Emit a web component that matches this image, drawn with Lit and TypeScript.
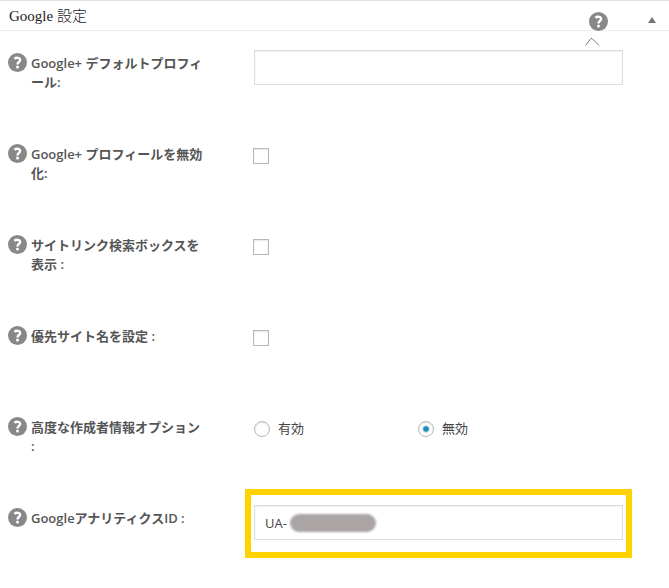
import { LitElement, html, css, svg } from "lit";
import { customElement, property } from "lit/decorators.js";

@customElement("help-button")
class HelpButton extends LitElement {
  static styles = css`
    :host {
      display: block;
      width: 19px;
      height: 19px;
      flex: none;
    }
    .help {
      display: block;
      width: 19px;
      height: 19px;
      padding: 0;
      border: 0;
      background: none;
      cursor: pointer;
    }
    .icon {
      display: block;
    }
  `;

  render() {
    return html`
      <button class="help" type="button" aria-label="ヘルプ">
        <svg class="icon" width="19" height="19" viewBox="0 0 19 19" aria-hidden="true">
          ${svg`
            <circle cx="9.5" cy="9.5" r="9.5" fill="#888" />
            <path d="M6.4 5.8C8 4.4 12.1 4.2 12.1 7C12.1 9.1 9.5 8.9 9.5 11.4" fill="none" stroke="#fff" stroke-width="2.4" />
            <circle cx="9.5" cy="14" r="1.5" fill="#fff" />
          `}
        </svg>
      </button>
    `;
  }
}

@customElement("setting-row")
class SettingRow extends LitElement {
  static styles = css`
    :host {
      display: flex;
      align-items: flex-start;
      min-height: 91px;
    }
    .heading {
      display: flex;
      gap: 4px;
      box-sizing: border-box;
      width: 246px;
      padding-top: 3px;
      flex: none;
    }
    .text {
      width: 174px;
      padding-top: 1px;
    }
    .field {
      flex: 1;
      min-width: 0;
    }
  `;

  render() {
    return html`
      <div class="heading">
        <help-button></help-button>
        <div class="text"><slot name="label"></slot></div>
      </div>
      <div class="field"><slot></slot></div>
    `;
  }
}

@customElement("app-root")
class AppRoot extends LitElement {
  @property() heading = "Google 設定";

  static styles = css`
    :host {
      display: block;
      background: #fff;
      color: #444;
      font: 13px/19px "Open Sans", "Noto Sans CJK JP", sans-serif;
    }
    .header {
      display: flex;
      align-items: center;
      box-sizing: border-box;
      height: 31px;
      padding: 0 8px 0 9px;
      border-top: 1px solid #e1e1e1;
      border-bottom: 1px solid #eee;
    }
    .title {
      flex: 1;
      margin: 0;
      color: #222;
      font: 300 15px/24px "Liberation Serif", "Noto Sans CJK JP", serif;
    }
    .hint {
      position: relative;
      align-self: flex-end;
      margin: 0 35px -1px 0;
    }
    .pointer {
      position: absolute;
      top: 25px;
      left: -4px;
    }
    .toggle {
      display: flex;
      align-items: center;
      justify-content: center;
      width: 18px;
      height: 20px;
      margin-top: 8px;
      padding: 0;
      border: 0;
      background: none;
    }
    .form {
      padding: 19px 46px 0 8px;
    }
    .label {
      display: block;
      color: #555;
      font-weight: 600;
    }
    .input {
      display: block;
      box-sizing: border-box;
      width: 100%;
      height: 35px;
      padding: 0 10px;
      border: 1px solid #ddd;
      border-radius: 0;
      background: #fff;
      box-shadow: inset 0 1px 2px rgba(0, 0, 0, 0.07);
      color: #444;
      font: inherit;
      outline: 0;
    }
    .box,
    .radio {
      display: block;
      appearance: none;
      box-sizing: border-box;
      width: 16px;
      height: 16px;
      margin: 0;
      border: 1px solid #b4b9be;
      background: #fff;
      box-shadow: inset 0 1px 2px rgba(0, 0, 0, 0.1);
      flex: none;
    }
    .box {
      margin: 7px 0 0 -1px;
    }
    .radio {
      border-radius: 50%;
    }
    .radio:checked {
      background: radial-gradient(circle, #1e8cbe 2px, #1e8cbe 2px, #fff 4px);
    }
    .choices {
      display: grid;
      grid-template-columns: 164px 1fr;
      padding-top: 5px;
    }
    .choice {
      display: flex;
      align-items: center;
      gap: 8px;
    }
    .highlight {
      position: relative;
      margin: -16px -9px 0;
      padding: 10px 3px 12px;
      border: 6px solid #ffd200;
    }
    .mask {
      position: absolute;
      top: 19px;
      left: 39px;
      width: 86px;
      height: 18px;
      border-radius: 9px;
      background: #aaa5a4;
      filter: blur(1px);
    }
  `;

  render() {
    return html`
      <header class="header">
        <h2 class="title">${this.heading}</h2>
        <div class="hint">
          <help-button></help-button>
          <svg class="pointer" width="15" height="10" viewBox="0 0 15 10" aria-hidden="true">
            <path d="M.5 8.5L6 1.5H7L14 8.5" fill="none" stroke="#777" />
          </svg>
        </div>
        <button class="toggle" type="button" aria-label="パネルを閉じる">
          <svg width="8" height="6" viewBox="0 0 8 6" aria-hidden="true">
            <path d="M4 0L8 6H0Z" fill="#72777c" />
          </svg>
        </button>
      </header>
      <form class="form" lang="ja">
        <setting-row>
          <label class="label" slot="label" for="profile">Google+ デフォルトプロフィール:</label>
          <input class="input" id="profile" type="text" />
        </setting-row>
        <setting-row>
          <label class="label" slot="label" for="disable">Google+ プロフィールを無効化:</label>
          <input class="box" id="disable" type="checkbox" />
        </setting-row>
        <setting-row>
          <label class="label" slot="label" for="search">サイトリンク検索ボックスを表示 :</label>
          <input class="box" id="search" type="checkbox" />
        </setting-row>
        <setting-row>
          <label class="label" slot="label" for="sitename">優先サイト名を設定 :</label>
          <input class="box" id="sitename" type="checkbox" />
        </setting-row>
        <setting-row>
          <span class="label" slot="label" id="author">高度な作成者情報オプション :</span>
          <div class="choices" role="radiogroup" aria-labelledby="author">
            <label class="choice"><input class="radio" type="radio" name="author" />有効</label>
            <label class="choice"><input class="radio" type="radio" name="author" checked />無効</label>
          </div>
        </setting-row>
        <setting-row>
          <label class="label" slot="label" for="analytics">GoogleアナリティクスID :</label>
          <div class="highlight">
            <input class="input" id="analytics" type="text" value="UA-" />
            <span class="mask"></span>
          </div>
        </setting-row>
      </form>
    `;
  }
}
